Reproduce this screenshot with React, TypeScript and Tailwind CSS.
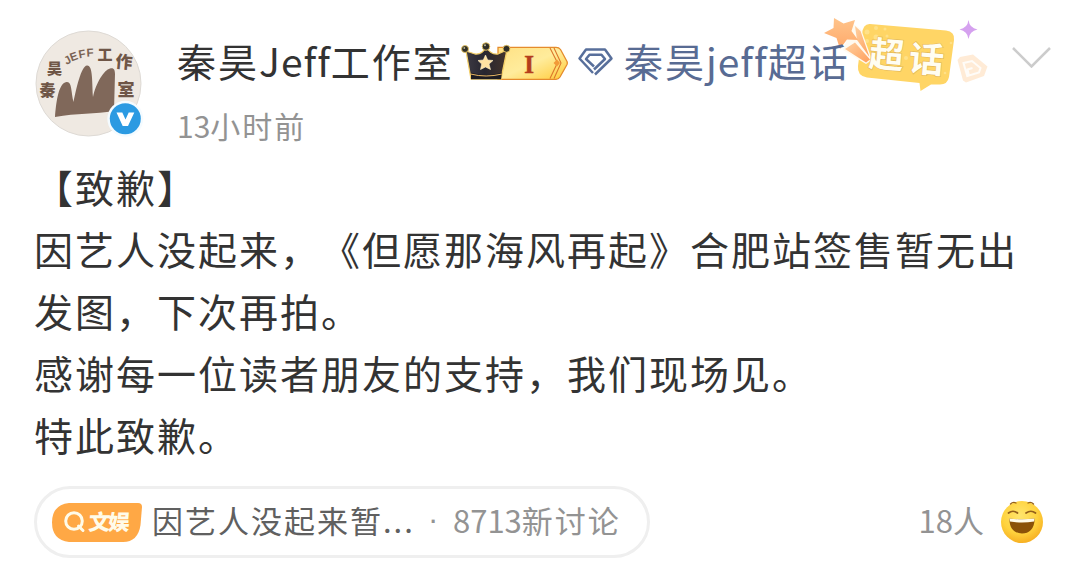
import type { ReactNode } from "react";

const postLines = [
  "【致歉】",
  "因艺人没起来，《但愿那海风再起》合肥站签售暂无出",
  "发图，下次再拍。",
  "感谢每一位读者朋友的支持，我们现场见。",
  "特此致歉。",
];

function Avatar() {
  return (
    <svg viewBox="34 28 112 112" className="h-[112px] w-[112px] shrink-0">
      <circle cx="88.5" cy="83.5" r="52.5" fill="#efe9e2" stroke="#dedad5" strokeWidth="1" />
      <path
        d="M55 117 C56 105 58 83 66.500 82 C72 81 71 92 73.500 102 C76 90 81 66 87 65.500 C93 65 92 82 93 97 C96 83 104 70 110 68.500 C114 67.500 115 70 115 74 L114 111 C95 114 77 113 55 117Z"
        fill="#80685a"
      />
      <g
        fill="#6f5647"
        fontFamily="'Noto Sans CJK SC', sans-serif"
        fontWeight="900"
        textAnchor="middle"
      >
        <text x="47.500" y="95.500" fontSize="16">秦</text>
        <text x="54.500" y="74" fontSize="15">昊</text>
        <text x="105" y="60" fontSize="15">工</text>
        <text x="124" y="68" fontSize="17" transform="rotate(5 124 62)">作</text>
        <text x="126" y="96" fontSize="17">室</text>
      </g>
      <g fill="#7a6354" fontFamily="'Liberation Sans', sans-serif" fontWeight="700" fontSize="11.500" textAnchor="middle">
        <text x="67.500" y="64" transform="rotate(-28 67.500 60)">J</text>
        <text x="74" y="60.500" transform="rotate(-20 74 57)">E</text>
        <text x="82" y="58" transform="rotate(-10 82 54)">F</text>
        <text x="90" y="56.500" transform="rotate(-3 90 53)">F</text>
      </g>
      <circle cx="125.300" cy="118.800" r="18" fill="#f4fbff" />
      <circle cx="125.300" cy="118.800" r="15.500" fill="#2b9ae2" />
      <path d="M116.500 112.500 H122.300 L125.500 119.500 L128.700 112.500 H134.300 L128 126 H122.700Z" fill="#fff" />
    </svg>
  );
}

function VipBadge() {
  return (
    <svg viewBox="460 40 110 44" className="h-[44px] w-[110px] shrink-0">
      <defs>
        <linearGradient id="gold" x1="0" y1="0" x2="1" y2="1">
          <stop offset="0" stopColor="#ffe184" />
          <stop offset="0.5" stopColor="#ffec9c" />
          <stop offset="1" stopColor="#ffcb38" />
        </linearGradient>
        <linearGradient id="crown" x1="0" y1="0" x2="1" y2="0">
          <stop offset="0" stopColor="#3d3a43" />
          <stop offset="0.450" stopColor="#272630" />
          <stop offset="1" stopColor="#43332b" />
        </linearGradient>
      </defs>
      <path d="M498 47.300 H556 Q559 47.300 560.500 49.500 L567 61.500 Q567.600 63 567 64.500 L560 77 Q558.500 79.300 556 79.300 H498Z" fill="url(#gold)" stroke="#e58b2c" strokeWidth="1.300" />
      <path d="M550 48 L557.500 62.800 L550 78.500 M554 48 L561 63 L554 78.500" fill="none" stroke="#dc772b" strokeWidth="1.100" />
      <path d="M553.500 63 L557 59.500 L560 63 L557 66.500Z" fill="#f29a38" />
      <path d="M466 51 L475 54 Q482 55 486 47 Q491 55 498 54 L507 50 L501 79 H471Z" fill="url(#crown)" stroke="#f4cf68" strokeWidth="1.300" strokeLinejoin="round" />
      <path d="M471 72.500 Q486 77.500 502 72.500 L501 79.300 H471Z" fill="#1d1c22" />
      <path d="M470.500 74 Q486 78 502 74" fill="none" stroke="#e9b765" strokeWidth="1" />
      <g fill="#302f28" stroke="#eac764" strokeWidth="0.900">
        <circle cx="465" cy="49" r="3.500" />
        <circle cx="486" cy="46.500" r="3.800" />
        <circle cx="506.500" cy="48.800" r="3.500" />
      </g>
      <circle cx="464.300" cy="48" r="0.900" fill="#bbb78e" />
      <circle cx="485" cy="45.300" r="1" fill="#bbb78e" />
      <path d="M485.500 55 L487.700 60 L493 60.500 L489 64 L490.500 69.500 L485.500 67 L480.500 69.500 L481.700 64 L478 60.500 L483.300 60Z" fill="#ffe2a2" stroke="#fff0c8" strokeWidth="0.600" />
      <text x="529" y="72.500" textAnchor="middle" fill="#b53d1c" stroke="#b53d1c" strokeWidth="0.500" fontFamily="'Liberation Serif', serif" fontWeight="700" fontSize="25">I</text>
    </svg>
  );
}

function Diamond() {
  return (
    <svg viewBox="577 46 38 34" className="h-[34px] w-[38px] shrink-0" fill="none" stroke="#586f9b" strokeWidth="2.500" strokeLinejoin="round">
      <path d="M593 74 L579.500 59.500 L586 50.500 H605 L611.500 59.500 L595 75.500" />
      <path d="M594 67.500 L586 60 L589.500 55.800 H601.500 L605 60 L594 70.500" />
    </svg>
  );
}

function SuperTopicArt() {
  return (
    <svg viewBox="820 10 172 86" className="absolute left-[820px] top-[10px] h-[86px] w-[172px]">
      <defs>
        <linearGradient id="trail" x1="0" y1="0" x2="1" y2="1">
          <stop offset="0" stopColor="#ffd0a0" />
          <stop offset="1" stopColor="#ff9f5c" />
        </linearGradient>
        <linearGradient id="star" x1="0" y1="0" x2="0" y2="1">
          <stop offset="0" stopColor="#ffc48b" />
          <stop offset="1" stopColor="#ffa96a" />
        </linearGradient>
      </defs>
      <path d="M870 24 L946 30.500 Q955 31.500 954 40 L949 77 Q947.500 85 939 84.500 L931 84.500 L920.500 91 L919.500 83 L867 77.500 Q857 76 858 66 L862 34 Q863 23.500 870 24Z" fill="#ffd565" />
      <g fill="#ffeaa0" opacity="0.600">
        <circle cx="867" cy="32" r="2.500" />
        <circle cx="876" cy="28" r="2" />
        <circle cx="876" cy="37" r="2.500" />
        <circle cx="885" cy="29" r="1.500" />
        <circle cx="867" cy="41" r="2" />
        <circle cx="887" cy="36" r="1.500" />
        <circle cx="906" cy="58" r="2" />
        <circle cx="945" cy="73" r="1.300" />
        <circle cx="951" cy="43" r="1.300" />
      </g>
      <path d="M853 24 L861 29 L872 60 L866 64 L843 50Z" fill="#fffaf0" />
      <path d="M845 49 L855 42.500 L870 59.500 L866 62.500Z" fill="url(#trail)" />
      <path d="M855 26 L860.500 31 L869.500 57 L857 40Z" fill="url(#trail)" />
      <path d="M834 18 L843.500 23.500 L855 20 L851.500 31 L858 40 L847 39.500 L840 49 L836.500 38 L824 33 L833.500 28Z" fill="url(#star)" />
      <g
        fill="#fffdf2"
        stroke="#e3b758"
        strokeWidth="1.200"
        paintOrder="stroke"
        fontFamily="'Noto Sans CJK SC', sans-serif"
        fontWeight="700"
        fontSize="35"
      >
        <text x="869" y="67.500" transform="rotate(5 886 54)">超</text>
        <text x="909" y="72" transform="rotate(5 926 59)">话</text>
      </g>
      <path d="M968.500 20 Q969.500 28 977.500 29.500 Q969.500 31 968.500 39 Q967.500 31 959.500 29.500 Q967.500 28 968.500 20Z" fill="#d5a1ef" />
      <path d="M960 57 L973 54.500 L987.500 66.500 L984 76 L966 82.500 L963 80.500 L957.500 60Z" fill="#ffebd6" />
      <path d="M967.500 77 L963.500 63 L972 61 L980.500 68 L979 72.500 L969 75.500 L967.500 69.500 L972.500 68" fill="none" stroke="#fffcf8" strokeWidth="2" />
    </svg>
  );
}

function LaughEmoji() {
  return (
    <svg viewBox="1000 499 46 46" className="h-[46px] w-[46px] shrink-0">
      <defs>
        <radialGradient id="face" cx="0.450" cy="0.350" r="0.700">
          <stop offset="0" stopColor="#ffe66e" />
          <stop offset="0.600" stopColor="#ffd23d" />
          <stop offset="1" stopColor="#f5a91d" />
        </radialGradient>
      </defs>
      <circle cx="1023" cy="522" r="21" fill="url(#face)" />
      <g fill="none" stroke="#94601b" strokeLinecap="round">
        <path d="M1011.500 504 Q1014 501.500 1017 503 M1029 503 Q1032 501.500 1034.500 504" strokeWidth="1.300" />
        <path d="M1009.500 513 Q1014 509.500 1018.500 513 M1027 513 Q1032 509.500 1036.500 513" strokeWidth="1.700" />
      </g>
      <path d="M1010.500 518.500 Q1023 520 1035.500 518.500 C1036 528 1030.500 533.500 1023 533.500 C1015.500 533.500 1010 528 1010.500 518.500Z" fill="#8b5208" />
      <path d="M1010.500 518.500 Q1023 520 1035.500 518.500 L1035 521.500 Q1023 523.500 1011 521.500Z" fill="#fffbe9" />
    </svg>
  );
}

function ChannelTag() {
  return (
    <svg viewBox="52 502 90 39" className="h-[39px] w-[90px] shrink-0">
      <path d="M69 502 H138 Q142 502 142 506 L140.500 524 Q138 541 123 541 H69 Q52 539 52 521.500 Q52 504 69 502Z" fill="#ffa845" />
      <circle cx="74" cy="520" r="8.300" fill="none" stroke="#fffbe9" strokeWidth="3" />
      <path d="M78.500 525 L83 529.500" stroke="#fffbe9" strokeWidth="3" strokeLinecap="round" />
      <text x="88" y="529" transform="translate(88 529) skewX(-5) translate(-88 -529)" fill="#fffbe9" fontFamily="'Noto Sans CJK SC', sans-serif" fontWeight="900" fontSize="21.500" textLength="43">
        文娱
      </text>
    </svg>
  );
}

function Latin({ children }: { children: ReactNode }) {
  return <span className="tracking-normal">{children}</span>;
}

export default function App() {
  return (
    <main className="relative flex h-[583px] w-[1080px] flex-col overflow-hidden bg-white pl-[34px] font-['Noto_Sans_CJK_SC',sans-serif] text-[#333] [text-spacing-trim:space-all]">
      <SuperTopicArt />

      <header className="relative flex h-[155px] pt-[28px]">
        <Avatar />
        <div className="ml-[31px] flex flex-col">
          <div className="flex h-[68px] items-center whitespace-nowrap text-[39px] leading-[64px]">
            <h1 className="h-[68px] w-[283px] tracking-[2px]">
              秦昊<span className="tracking-[1px]">Jeff</span>工作室
            </h1>
            <VipBadge />
            <div className="ml-[7px] flex items-center gap-[9px] text-[#586b93]">
              <Diamond />
              <span className="h-[68px] tracking-[2px]">
                秦昊<span className="tracking-[1px]">jeff</span>超话
              </span>
            </div>
          </div>
          <time className="h-[58px] text-[30px] leading-[58px] tracking-[2px] text-[#939393]">
            <Latin>13</Latin>小时前
          </time>
        </div>
        <svg viewBox="0 0 40 22" className="absolute left-[978px] top-[46px] h-[22px] w-[40px]" fill="none" stroke="#ccc" strokeWidth="2.500">
          <path d="M1 2 L19.500 20.500 L38 2" />
        </svg>
      </header>

      <article className="text-[39px] leading-[62px] tracking-[2px]">
        {postLines.map((line) => (
          <p key={line} className="whitespace-nowrap">
            {line}
          </p>
        ))}
      </article>

      <footer className="mt-[21px] flex w-[1011px] items-center justify-between">
        <div className="flex h-[72px] w-[616px] items-center whitespace-nowrap rounded-full border-[3px] border-[#efefef] pl-[15px] text-[31px] leading-[60px] tracking-[2px]">
          <ChannelTag />
          <span className="ml-[10px] mb-[4px] w-[264px] text-[#606060]">因艺人没起来暂...</span>
          <span className="mb-[4px] ml-[12px] w-[25px] font-['Liberation_Sans',sans-serif] text-[#939393]">·</span>
          <span className="mb-[4px] text-[#939393]">
            <Latin>8713</Latin>新讨论
          </span>
        </div>
        <div className="flex items-center gap-[15px] text-[31px] text-[#939393]">
          <span className="mb-[4px]">18人</span>
          <LaughEmoji />
        </div>
      </footer>
    </main>
  );
}
